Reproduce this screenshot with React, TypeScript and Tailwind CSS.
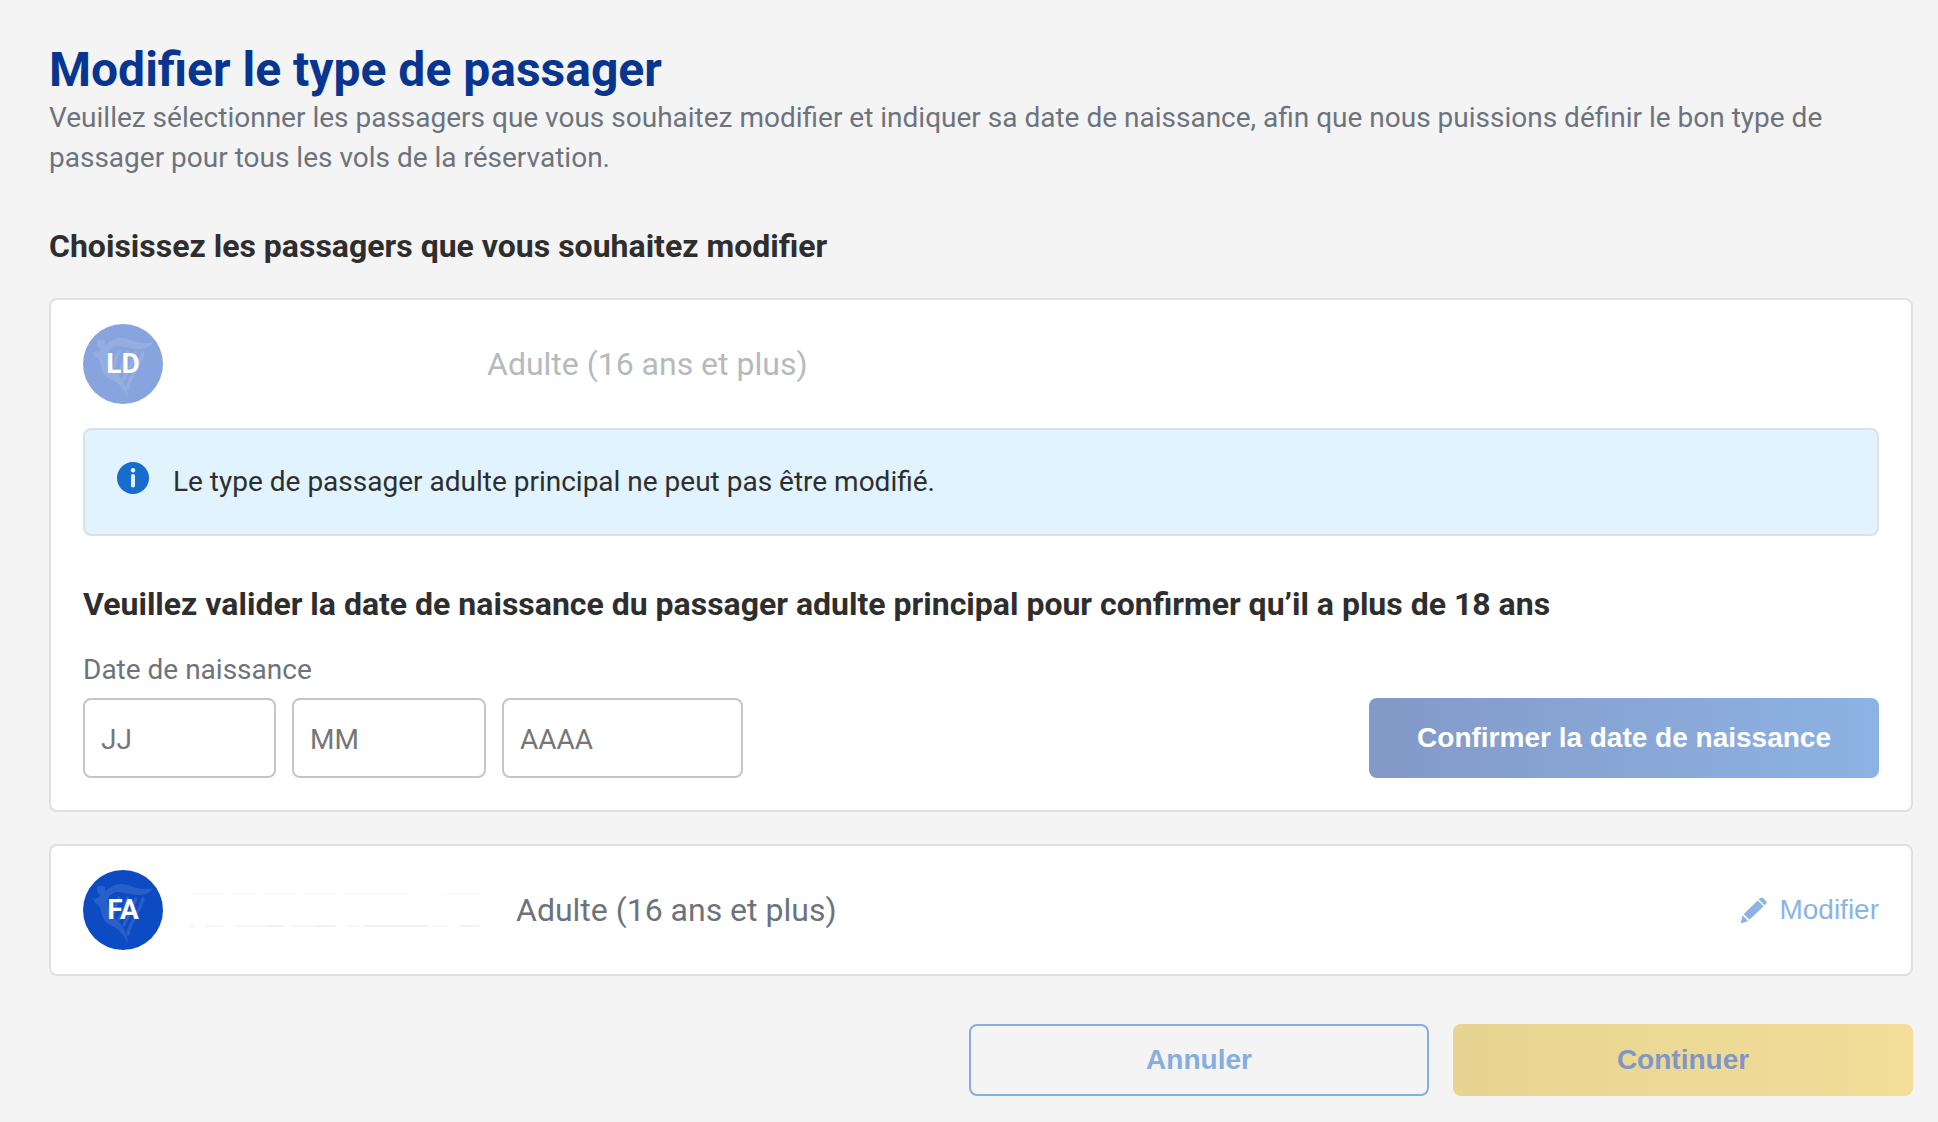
import clsx from 'clsx'
import React from 'react'

type AvatarProps = {
  initials: string
  disabled?: boolean
}

type PassengerRowProps = {
  initials: string
  type: string
  disabled?: boolean
  name: React.ReactNode
  action?: React.ReactNode
}

type DateFieldProps = {
  label: string
  placeholder: string
  maxLength: number
  className: string
}

function HarpLogo() {
  return (
    <svg
      viewBox="0 0 80 80"
      className="absolute inset-0 size-full"
      fill="#fff"
      aria-hidden="true"
    >
      <g opacity={0.11}>
        <path d="M14 17C15 15.500 20 15.500 22 17L22 21C26 19 30 14 38 14C46 14 52 19 60 19C64 19 67 19 70 18.500C68 22 63 24.500 56 25C48 25 42 22 35 22C29 22 24 27 24 33C25 39 29 44 33 49C38 54 44 60 45 74C42 67 38 62 33 58C27 55 20 52 19 45C18 39 17 37 14 34C11 32 10 30 10 28C13 29 16 28 17 26C18 25 15 23 14 21Z" />
        <g
          fill="none"
          stroke="#fff"
          strokeWidth={3.4}
          strokeLinecap="round"
        >
          <path d="M36 28C33 32 32 38 31 44" />
          <path d="M44.500 28C43 36 39 43 36 49" />
          <path d="M52.500 29C50 39 44 47 41 55" />
          <path d="M60 29C57 38 54 43 51 49C48 54 45 59 45 64" />
        </g>
      </g>
    </svg>
  )
}

function Avatar({ initials, disabled }: AvatarProps) {
  return (
    <div
      className={clsx(
        'relative flex size-20 shrink-0 items-center justify-center rounded-full',
        disabled ? 'bg-[#88a4df]' : 'bg-[#0d4bc3]'
      )}
    >
      <HarpLogo />
      <span className="relative text-[28px] leading-10 font-bold text-white">
        {initials}
      </span>
    </div>
  )
}

// Faint edges left visible around a masked name
function MaskedName() {
  return (
    <svg
      viewBox="0 0 296 36"
      className="h-9 w-[296px]"
      fill="none"
      aria-hidden="true"
    >
      <path
        d="M2 2h34M46 2h24M76 2h36M118 2h30M154 2h68M256 2h36"
        stroke="#f8f8f8"
      />
      <path
        d="M2 34h6M18 34h18M48 34h50M104 34h46M160 34h12M246 34h14"
        stroke="#f7f7f7"
        strokeWidth={2}
      />
      <path
        d="M176 34h66M272 34h20M80 34h16M130 34h18"
        stroke="#f1f1f1"
        strokeWidth={2}
      />
    </svg>
  )
}

function PassengerRow({
  initials,
  type,
  disabled,
  name,
  action
}: PassengerRowProps) {
  return (
    <div className="flex items-center">
      <Avatar initials={initials} disabled={disabled} />
      {name}
      <span
        className={clsx(
          'text-[32px] leading-10',
          disabled ? 'text-[#b6b9be]' : 'text-[#6d737d]'
        )}
      >
        {type}
      </span>
      {action}
    </div>
  )
}

function InfoIcon() {
  return (
    <svg viewBox="0 0 32 32" className="size-8 shrink-0" aria-hidden="true">
      <circle cx="16" cy="16" r="16" fill="#186ccb" />
      <circle cx="16" cy="8.300" r="2.200" fill="#e1f3ff" />
      <rect x="14" y="12" width="4" height="13.500" rx="2" fill="#e1f3ff" />
    </svg>
  )
}

function PencilIcon() {
  return (
    <svg
      viewBox="0 0 27 27"
      className="size-[27px]"
      fill="currentColor"
      aria-hidden="true"
    >
      <path d="M20 1.200c1-1 2.200-1 3.200 0l2.700 2.700c1 1 1 2.200 0 3.100l-1.300 1.300-5.900-5.800z" />
      <path d="M17.700 3.500l5.900 5.800L9.500 22.800 3.700 17z" />
      <path d="M2.500 18.300l5.700 5.800L.7 26.500z" />
    </svg>
  )
}

function DateField({
  label,
  placeholder,
  maxLength,
  className
}: DateFieldProps) {
  return (
    <input
      type="text"
      inputMode="numeric"
      aria-label={label}
      placeholder={placeholder}
      maxLength={maxLength}
      className={clsx(
        'h-20 rounded-lg border-2 border-[#c3c6cc] bg-white px-4 pt-0.5 text-[28px] text-[#2e2e2e] placeholder:text-[#767676]',
        className
      )}
    />
  )
}

function App() {
  return (
    <main className="min-h-screen bg-[#f4f4f4] pt-[41px] pr-[25px] pb-6 pl-[49px] font-[Roboto,sans-serif] text-[#2e2e2e]">
      <h1 className="text-5xl leading-[57px] font-bold text-[#073590]">
        Modifier le type de passager
      </h1>
      <p className="text-[28px] leading-10 text-[#6d737d]">
        Veuillez sélectionner les passagers que vous souhaitez modifier et
        indiquer sa date de naissance, afin que nous puissions définir le bon
        type de passager pour tous les vols de la réservation.
      </p>

      <h2 className="mt-12 text-[32px] leading-10 font-bold">
        Choisissez les passagers que vous souhaitez modifier
      </h2>

      <section className="mt-8 rounded-lg border-2 border-[#e0e0e0] bg-white px-8 pt-6 pb-8">
        <PassengerRow
          initials="LD"
          type="Adulte (16 ans et plus)"
          disabled
          name={<div className="w-[324px]" />}
        />
        <div className="mt-6 flex gap-6 rounded-lg border-2 border-[#dce1e5] bg-[#e1f3ff] p-8">
          <InfoIcon />
          <p className="text-[28px] leading-10">
            Le type de passager adulte principal ne peut pas être modifié.
          </p>
        </div>
        <h3 className="mt-12 text-[32px] leading-10 font-bold">
          Veuillez valider la date de naissance du passager adulte principal
          pour confirmer qu’il a plus de 18 ans
        </h3>
        <form
          className="mt-[26px] flex items-end justify-between"
          onSubmit={(e) => e.preventDefault()}
        >
          <fieldset>
            <legend className="text-[28px] leading-10 text-[#6d737d]">
              Date de naissance
            </legend>
            <div className="mt-2 flex gap-4">
              <DateField
                label="Jour"
                placeholder="JJ"
                maxLength={2}
                className="w-[193px]"
              />
              <DateField
                label="Mois"
                placeholder="MM"
                maxLength={2}
                className="w-[194px]"
              />
              <DateField
                label="Année"
                placeholder="AAAA"
                maxLength={4}
                className="w-[241px]"
              />
            </div>
          </fieldset>
          <button
            type="submit"
            disabled
            className="h-20 rounded-lg bg-linear-to-r from-[#8399c8] to-[#8cb3e3] px-12 font-[Liberation_Sans,Arial,sans-serif] text-[28px] font-bold text-white"
          >
            Confirmer la date de naissance
          </button>
        </form>
      </section>

      <section className="mt-8 rounded-lg border-2 border-[#e0e0e0] bg-white px-8 py-6">
        <PassengerRow
          initials="FA"
          type="Adulte (16 ans et plus)"
          name={
            <div className="w-[353px] pl-6">
              <MaskedName />
            </div>
          }
          action={
            <button
              type="button"
              disabled
              className="ml-auto flex items-center gap-3 font-[Liberation_Sans,Arial,sans-serif] text-[28px] leading-10 text-[#8cb3e3]"
            >
              <PencilIcon />
              Modifier
            </button>
          }
        />
      </section>

      <div className="mt-12 flex justify-end gap-6 font-[Liberation_Sans,Arial,sans-serif] text-[28px] font-bold">
        <button
          type="button"
          disabled
          className="h-[72px] w-[460px] rounded-lg border-2 border-[#87addf] text-[#87addf]"
        >
          Annuler
        </button>
        <button
          type="button"
          disabled
          className="h-[72px] w-[460px] rounded-lg bg-linear-to-r from-[#e7d492] to-[#f2de99] text-[#8097c6]"
        >
          Continuer
        </button>
      </div>
    </main>
  )
}

export default App
